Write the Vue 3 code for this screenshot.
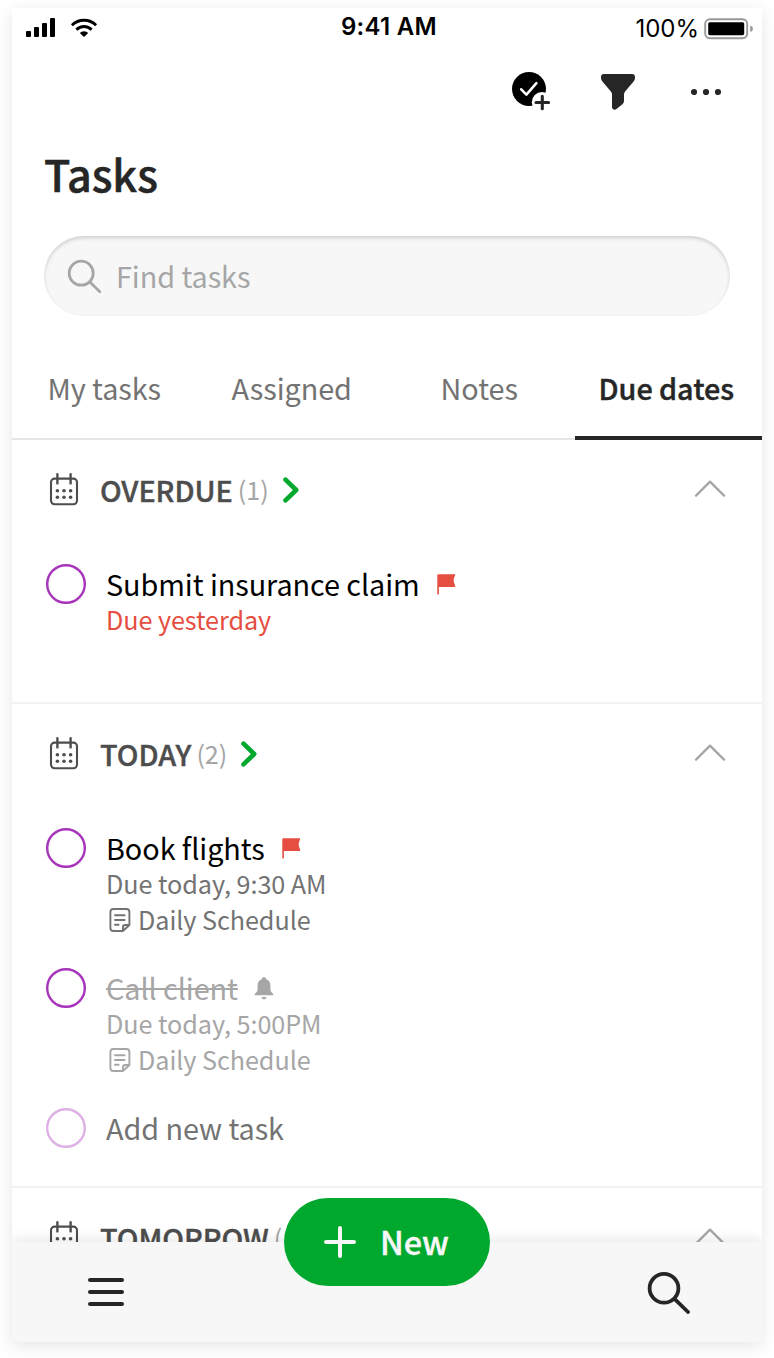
<script setup>
const tabs = [
  { label: 'My tasks', cls: 'tab-my' },
  { label: 'Assigned', cls: 'tab-assigned' },
  { label: 'Notes', cls: 'tab-notes' },
  { label: 'Due dates', cls: 'tab-due', active: true },
]

const sections = [
  {
    title: 'OVERDUE',
    count: 1,
    tasks: [{ title: 'Submit insurance claim', mark: 'flag', due: 'Due yesterday', overdue: true }],
  },
  {
    title: 'TODAY',
    count: 2,
    tasks: [
      { title: 'Book flights', mark: 'flag', due: 'Due today, 9:30 AM', note: 'Daily Schedule' },
      { title: 'Call client', mark: 'bell', due: 'Due today, 5:00PM', note: 'Daily Schedule', done: true },
    ],
    adder: true,
  },
  { title: 'TOMORROW', count: 1, tasks: [] },
]
</script>

<template>
  <div class="stage">
    <main class="phone">
      <div class="status">
        <div class="signals">
          <svg width="30" height="20" viewBox="0 0 30 20">
            <rect x="0" y="13" width="5" height="6" rx="1" />
            <rect x="8" y="9" width="5" height="10" rx="1" />
            <rect x="16" y="5" width="5" height="14" rx="1" />
            <rect x="24" y="0" width="5" height="19" rx="1" />
          </svg>
          <svg class="wifi" width="28" height="20" viewBox="0 0 28 20">
            <path d="M1.9 7.2A17.2 17.2 0 0 1 26.1 7.2" fill="none" stroke="#000" stroke-width="2.9" />
            <path d="M6.4 11.7A10.8 10.8 0 0 1 21.6 11.7" fill="none" stroke="#000" stroke-width="2.9" />
            <path d="M9.8 14.9A6 6 0 0 1 18.2 14.9L14 19Z" />
          </svg>
        </div>
        <span class="clock">9:41 AM</span>
        <div class="power">
          <span class="percent">100%</span>
          <svg width="50" height="22" viewBox="0 0 50 22">
            <rect x="1.2" y="1.2" width="42" height="19" rx="4.6" fill="none" stroke="#999" stroke-width="1.9" />
            <rect x="4.2" y="4.2" width="36" height="13" rx="1.6" />
            <path d="M46.2 7.5Q49 8.3 49 10.8T46.2 14Z" fill="#999" />
          </svg>
        </div>
      </div>

      <div class="actions">
        <svg width="40" height="40" viewBox="0 0 40 40">
          <circle cx="18" cy="18" r="17" />
          <path d="M10.2 18.3L15.4 23.6L25.4 12.2" fill="none" stroke="#fff" stroke-width="2.6" stroke-linecap="round" stroke-linejoin="round" />
          <circle cx="31" cy="31.3" r="10.2" fill="#fff" />
          <path d="M31.3 25.2V37.8M25 31.5H37.6" stroke="#262626" stroke-width="3.1" stroke-linecap="round" />
        </svg>
        <svg class="funnel" width="34" height="36" viewBox="0 0 34 36">
          <path d="M3 0H31Q34 0 34 3V4Q34 5.7 32.6 7.4L24.3 17.3Q23 18.7 23 20.5V27Q23 29 21.4 30.3L15.5 35Q13.5 36.6 11.8 35Q11 34.4 11 33V20.5Q11 18.7 9.7 17.3L1.4 7.4Q0 5.7 0 4V3Q0 0 3 0Z" fill="#262626" />
        </svg>
        <svg class="more" width="30" height="8" viewBox="0 0 30 8">
          <circle v-for="x in [3, 15, 27]" :key="x" :cx="x" cy="4" r="3.1" fill="#262626" />
        </svg>
      </div>

      <h1>Tasks</h1>

      <div class="search">
        <svg width="36" height="36" viewBox="0 0 36 36" fill="none" stroke="#a6a6a6" stroke-width="2.8" stroke-linecap="round">
          <circle cx="15.2" cy="15.2" r="12" />
          <path d="M23.7 23.7L33.8 33.8" />
        </svg>
        <span>Find tasks</span>
      </div>

      <nav class="tabs">
        <div v-for="t in tabs" :key="t.label" class="tab" :class="[t.cls, { active: t.active }]">
          <span>{{ t.label }}</span>
        </div>
      </nav>

      <section v-for="s in sections" :key="s.title">
        <header>
          <svg class="calendar" width="30" height="34" viewBox="0 0 30 34">
            <rect x="2" y="5.6" width="26" height="25.6" rx="3.6" fill="none" stroke="#4d4d4d" stroke-width="2.1" />
            <path d="M8.4 1.2V10.4M21.6 1.2V10.4" stroke="#4d4d4d" stroke-width="2.4" stroke-linecap="round" />
            <template v-for="y in [17.7, 24.3]" :key="y">
              <circle v-for="x in [8.4, 15, 21.6]" :key="x" :cx="x" :cy="y" r="1.8" fill="#4d4d4d" />
            </template>
          </svg>
          <h2>{{ s.title }}</h2>
          <span class="count">({{ s.count }})</span>
          <svg class="go" width="16" height="26" viewBox="0 0 16 26">
            <path d="M2.5 2.7L13.2 13L2.5 23.3" fill="none" stroke="#00a82d" stroke-width="4.6" stroke-linecap="round" stroke-linejoin="round" />
          </svg>
          <svg class="collapse" width="32" height="18" viewBox="0 0 32 18">
            <path d="M2 16.6L16 2.6L30 16.6" fill="none" stroke="#a6a6a6" stroke-width="2.3" stroke-linecap="round" stroke-linejoin="round" />
          </svg>
        </header>

        <article v-for="t in s.tasks" :key="t.title" :class="{ done: t.done }">
          <svg class="check" width="40" height="40" viewBox="0 0 40 40">
            <circle cx="20" cy="20" r="18.8" />
          </svg>
          <div class="body">
            <div class="name">
              <span class="title">{{ t.title }}</span>
              <svg v-if="t.mark === 'flag'" class="flag" width="19" height="21" viewBox="0 0 19 21">
                <path d="M0.3 1.3Q0.3 0.2 1.4 0.2H17.5Q18.6 0.2 18.2 1.3Q16.6 4.5 16.6 6.3Q16.8 9 18.3 12Q18.5 13.1 17.5 13.1H1.9V20.2Q1 20.8 0.3 20.2Z" fill="#e54e40" />
              </svg>
              <svg v-else class="bell" width="20" height="23" viewBox="0 0 20 23">
                <path d="M8 2Q8 0 10 0T12 2Q16.4 3.5 16.4 8.5V12.5Q16.4 14.6 18.6 16.2Q20 17.7 18.8 18.2H1.2Q0 17.7 1.4 16.2Q3.6 14.6 3.6 12.5V8.5Q3.6 3.5 8 2Z" fill="#a6a6a6" />
                <path d="M7.3 20H12.7Q12 22.4 10 22.4T7.3 20Z" fill="#a6a6a6" />
              </svg>
            </div>
            <div class="due" :class="{ late: t.overdue }">{{ t.due }}</div>
            <div v-if="t.note" class="note">
              <svg width="22" height="24" viewBox="0 0 22 24" fill="none" stroke="currentColor" stroke-width="1.9" stroke-linecap="round" stroke-linejoin="round">
                <path d="M13.9 23H4.4Q1.4 23 1.4 20V4Q1.4 1 4.4 1H17.4Q20.4 1 20.4 4V17L13.9 23V19.5Q13.9 17 16.4 17H20.4" />
                <path d="M6 7.2H15.6M6 12H15.6M6 16.8H9.6" />
              </svg>
              <span>{{ t.note }}</span>
            </div>
          </div>
        </article>

        <article v-if="s.adder" class="adder">
          <svg class="check" width="40" height="40" viewBox="0 0 40 40">
            <circle cx="20" cy="20" r="18.8" />
          </svg>
          <div class="body">
            <div class="name"><span class="title">Add new task</span></div>
          </div>
        </article>
      </section>

      <footer>
        <svg width="36" height="28" viewBox="0 0 36 28">
          <path d="M2 2H34M2 14H34M2 26H34" stroke="#262626" stroke-width="4" stroke-linecap="round" />
        </svg>
        <svg width="44" height="44" viewBox="0 0 44 44" fill="none" stroke="#262626" stroke-width="3.8" stroke-linecap="round">
          <circle cx="18" cy="18.3" r="14.4" />
          <path d="M29 29.3L42 42" />
        </svg>
        <button class="new">
          <svg width="32" height="32" viewBox="0 0 32 32">
            <path d="M16 2V30M2 16H30" stroke="#f7f7f7" stroke-width="4" stroke-linecap="round" />
          </svg>
          <span>New</span>
        </button>
      </footer>
    </main>
  </div>
</template>

<style>
body {
  background: #fff;
}
</style>

<style scoped>
* {
  box-sizing: border-box;
}
.stage {
  width: 774px;
  height: 1358px;
  padding: 8px 12px 16px;
  overflow: hidden;
}
.phone {
  position: relative;
  height: 1334px;
  background: #fff;
  box-shadow: 0 4px 16px rgba(0, 0, 0, 0.1);
  font-family: "Noto Sans CJK SC", "Open Sans", sans-serif;
  font-size: 28.8px;
  letter-spacing: -0.06px;
  color: #262626;
  white-space: nowrap;
}
svg {
  display: block;
  flex: none;
}
.status {
  display: grid;
  grid-template-columns: 1fr auto 1fr;
  height: 40px;
  padding: 0 8px 0 14px;
  font-family: Inter, sans-serif;
  font-size: 24px;
  color: #000;
}
.signals {
  display: flex;
  padding-top: 10px;
}
.wifi {
  margin-left: 14px;
}
.clock {
  margin: 0 1px 0 -1px;
  font-weight: 600;
  line-height: 38px;
  letter-spacing: 0.3px;
}
.power {
  display: flex;
  justify-content: flex-end;
  gap: 5px;
}
.power svg {
  margin-top: 10px;
}
.percent {
  line-height: 42px;
  letter-spacing: 0;
}
.actions {
  display: flex;
  justify-content: flex-end;
  padding: 23px 41px 0 0;
  height: 96px;
}
.funnel {
  margin: 3px 56px 0 50px;
}
.more {
  margin-top: 17px;
}
h1 {
  margin: 0;
  padding-left: 32px;
  height: 92px;
  font-size: 43.2px;
  line-height: 58px;
  font-weight: 500;
  -webkit-text-stroke: 0.5px;
}
.search {
  display: flex;
  align-items: center;
  width: 686px;
  height: 80px;
  margin-left: 32px;
  padding-left: 22px;
  border-radius: 40px;
  background: #f7f7f7;
  box-shadow: inset 0 2px 4px -0.5px rgba(0, 0, 0, 0.2);
  color: #a6a6a6;
}
.search span {
  margin: -2px 0 0 14px;
}
.tabs {
  display: grid;
  grid-template-columns: repeat(4, 1fr);
  height: 124px;
  padding-top: 40px;
  box-shadow: inset 0 -2px #e6e6e6;
  color: #737373;
}
.tab {
  padding: 12px 3px 0 0;
  text-align: center;
  line-height: 40px;
}
.active {
  padding-right: 4px;
  border-bottom: 4px solid #262626;
  color: #262626;
  font-weight: 500;
  -webkit-text-stroke: 0.4px;
}
section {
  border-bottom: 2px solid #f2f2f2;
}
section:last-of-type {
  border: 0;
  height: 54px;
}
header {
  display: flex;
  height: 124px;
  padding: 29px 36px 0 37px;
  line-height: 42px;
}
.calendar {
  margin-top: 4px;
}
h2 {
  margin: 0 5px 0 21px;
  font-size: 28.8px;
  font-weight: 500;
  color: #4d4d4d;
  -webkit-text-stroke: 0.4px;
}
.count {
  font-size: 25.2px;
  line-height: 40px;
  color: #a6a6a6;
}
.go {
  margin: 8px 0 0 14px;
}
.collapse {
  margin: 10px 0 0 auto;
}
article {
  display: flex;
  height: 140px;
  padding-left: 34px;
}
article:last-child {
  height: 138px;
}
.adder:last-child {
  height: 78px;
}
.check {
  fill: none;
  stroke: #a734bb;
  stroke-width: 2.4px;
}
.body {
  margin: 1px 0 0 20px;
  line-height: 36px;
}
.name {
  display: flex;
  height: 36px;
  line-height: 38px;
  color: #000;
}
.flag {
  margin: 9px 0 0 17.5px;
}
.bell {
  margin: 8px 0 0 16px;
}
.due,
.note {
  font-size: 25.2px;
  color: #737373;
}
.late {
  color: #e54e40;
}
.note {
  display: flex;
}
.note svg {
  margin: 7px 7px 0 3px;
}
.done .name,
.done .due,
.done .note {
  color: #a6a6a6;
}
.done .title {
  text-decoration: line-through 2px;
}
.adder .check {
  stroke: #deb0e6;
}
.adder .name {
  color: #737373;
}
footer {
  position: absolute;
  left: 0;
  right: 0;
  bottom: 0;
  display: flex;
  justify-content: space-between;
  align-items: center;
  height: 100px;
  padding: 0 72px 0 76px;
  background: #f7f7f7;
  box-shadow: 0 -2px 12px rgba(0, 0, 0, 0.1);
  clip-path: inset(-60px 0 0 0);
}
section:last-of-type header {
  height: 54px;
  overflow: hidden;
}
.new {
  position: absolute;
  left: 272px;
  top: -44px;
  display: flex;
  align-items: center;
  width: 206px;
  height: 88px;
  padding: 0 0 0 40px;
  border: 0;
  border-radius: 44px;
  background: #00a82d;
  color: #f7f7f7;
  font: 500 32.4px "Noto Sans CJK SC", sans-serif;
  -webkit-text-stroke: 0.4px;
}
.new span {
  margin: -3px 0 0 24px;
}
</style>
